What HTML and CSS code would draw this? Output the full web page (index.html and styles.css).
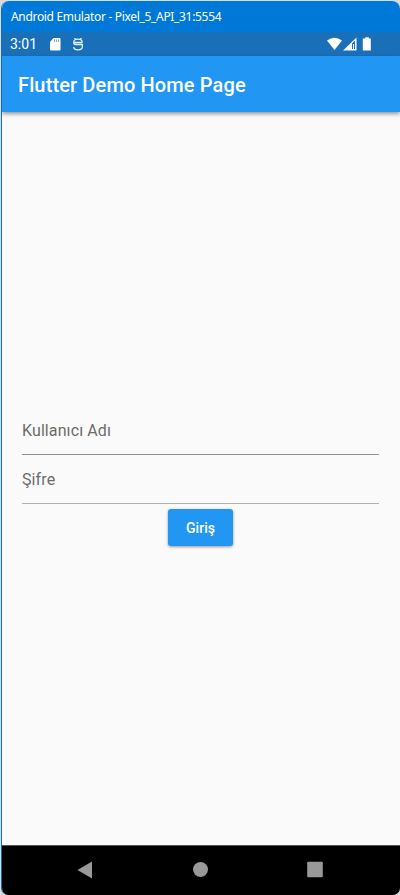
FILE: index.html
```html
<!DOCTYPE html>
<html lang="tr">
<head>
<meta charset="utf-8">
<title>Android Emulator</title>
<link rel="stylesheet" href="styles.css">
</head>
<body>
<div class="window">
  <header class="titlebar"><span>Android Emulator - Pixel_5_API_31:5554</span></header>
  <div class="statusbar">
    <span class="clock">3:01</span>
    <svg class="sd" width="11" height="13" viewBox="0 0 11 13"><path fill="#fff" d="M3.500 0h6q1 0 1 1v10.500q0 1-1 1H1q-1 0-1-1V4z"/><path stroke="#1a70b8" stroke-opacity=".6" stroke-width="1" d="M4.500 1.500v2.500M6.500 1.500v2.500M8.500 1.500v2.500"/></svg>
    <svg class="debug" width="10" height="13" viewBox="0 0 10 13"><path fill="none" stroke="#e4eff8" stroke-width="1.300" d="M1.500 0l1 1.200M8.500 0l-1 1.200M9.300 4.500Q9.300 1.200 5 1.200T.7 4.200Q.7 6.500 2.500 6.500H9.300V9Q9.300 11.800 5 11.800T.7 9M1 4.500h8.300"/></svg>
    <span class="spacer"></span>
    <svg class="signals" width="46" height="15" viewBox="0 0 46 15"><path fill="#fff" d="M0 3.500Q7.500-2 15 3.500L7.500 13z"/><path fill="#fff" fill-rule="evenodd" d="M16 13.500L29.500.5v13zM25 6.500v5.500h3V3.600z"/><path fill="#fff" d="M26 7h1v5h-1zM38.300.300h3.500v1.200h2V13.500h-8V1.500h2.500z"/></svg>
  </div>
  <div class="appbar"><h1>Flutter Demo Home Page</h1></div>
  <main class="content">
    <div class="field">Kullanıcı Adı</div>
    <div class="field second">Şifre</div>
    <button class="login">Giriş</button>
  </main>
  <nav class="navbar">
    <svg width="16" height="18" viewBox="0 0 16 18"><path fill="#999" d="M15 .5v17L.5 9z"/></svg>
    <svg width="16" height="18" viewBox="0 0 16 18"><circle cx="8.500" cy="8.500" r="7.500" fill="#999"/></svg>
    <svg width="16" height="18" viewBox="0 0 16 18"><rect x=".2" y=".7" width="15.600" height="15.600" rx="1" fill="#999"/></svg>
  </nav>
</div>
</body>
</html>
```
FILE: styles.css
```css
* { box-sizing: border-box; }
body { margin: 0; background: #d9dcdc; font-family: Roboto, sans-serif; }
.window {
  display: flex; flex-direction: column;
  width: 399px; height: 894px; margin: 1px 0 0 1px;
  border-left: 1px solid #1070bc; border-radius: 8px 8px 7px 7px;
  overflow: hidden; background: #fafafa;
}
.titlebar {
  display: flex; align-items: center; height: 31px; padding: 1px 0 0 9px;
  background: #0078d7; color: #fff;
  font: 12px/16px "Noto Sans", "Open Sans", sans-serif; white-space: nowrap;
}
.titlebar span { letter-spacing: -0.32px; }
.statusbar {
  display: flex; align-items: center; height: 24px; padding: 0 27px 0 8px;
  background: #1a70b8; color: #fff;
}
.clock { width: 40px; font-size: 14px; line-height: 24px; }
.sd { margin-right: 12px; }
.spacer { flex: 1; }
.appbar {
  position: relative; flex: none; display: flex; align-items: center;
  height: 56px; padding: 2px 0 0 16px; background: #2196f3; color: #fff;
  box-shadow: 0 2px 4px rgba(0,0,0,.4);
}
.appbar h1 { margin: 0; font-size: 20px; font-weight: 500; line-height: 24px; letter-spacing: .13px; white-space: nowrap; }
.content { flex: 1; display: flex; flex-direction: column; padding: 294px 21px 0 20px; }
.field {
  height: 49px; padding-top: 15px; border-bottom: 1px solid #919191;
  color: #6c6c6c; font-size: 16px; line-height: 20px; letter-spacing: .1px;
}
.second { border-color: #b0b0b0; }
.login {
  align-self: center; width: 65px; height: 37px; margin-top: 5px; padding: 0;
  border: 0; border-radius: 3px; background: #2196f3; color: #fff;
  font: 500 14px/20px Roboto, sans-serif; letter-spacing: .05px;
  box-shadow: 0 1px 3px rgba(0,0,0,.4);
}
.navbar {
  display: flex; justify-content: space-between; align-items: center;
  height: 50px; padding: 0 77px 2px 75px; border-top: 1px solid #555; background: #000;
}
```
